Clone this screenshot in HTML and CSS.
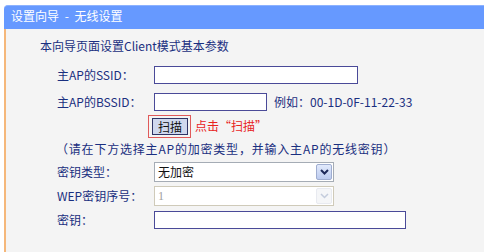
FILE: index.html
```html
<!DOCTYPE html>
<html>
    <head>
        <meta charset="utf-8">
        <title>设置向导 - 无线设置</title>
        <link rel="stylesheet" href="styles.css">
    </head>
    <body>
        <div class="wizard">
            <div class="wizard-title">设置向导 - 无线设置</div>
            <div class="wizard-body">
                <p class="intro">本向导页面设置Client模式基本参数</p>
                <div class="form">
                    <div class="row">
                        <label class="lbl">主AP的SSID：</label>
                        <input class="txt txt-ssid" type="text">
                    </div>
                    <div class="row row-bssid">
                        <label class="lbl">主AP的BSSID：</label>
                        <input class="txt txt-bssid" type="text">
                        <span class="hint">例如：00-1D-0F-11-22-33</span>
                    </div>
                    <div class="row">
                        <span class="lbl lbl-scan"></span>
                        <span class="scan-mark"><button class="btn-scan">扫描</button></span>
                        <span class="scan-tip">点击“扫描”</span>
                    </div>
                    <p class="note">（请在下方选择主AP的加密类型，并输入主AP的无线密钥）</p>
                    <div class="row">
                        <label class="lbl">密钥类型：</label>
                        <div class="select">
                            <span class="select-val">无加密</span>
                            <span class="select-btn">
                                <svg width="9" height="6" viewBox="0 0 9 6"><path d="M1 1 L4.5 4.5 L8 1" fill="none" stroke="#1e2a5a" stroke-width="2"/></svg>
                            </span>
                        </div>
                    </div>
                    <div class="row">
                        <label class="lbl">WEP密钥序号：</label>
                        <div class="select select-off">
                            <span class="select-val">1</span>
                            <span class="select-btn">
                                <svg width="9" height="6" viewBox="0 0 9 6"><path d="M1 1 L4.5 4.5 L8 1" fill="none" stroke="#c4ccdc" stroke-width="1.5"/></svg>
                            </span>
                        </div>
                    </div>
                    <div class="row">
                        <label class="lbl">密钥：</label>
                        <input class="txt txt-key" type="text">
                    </div>
                </div>
            </div>
        </div>
    </body>
</html>
```

FILE: styles.css
```css
body{
    margin: 0;
    background: #ffffff;
    font-family: "Noto Sans CJK SC", "Liberation Sans", sans-serif;
    font-size: 12px;
    line-height: 16px;
    color: #1a2f80;
}
.wizard{
    margin: 5px 0 0 4px;
}
.wizard-title{
    height: 24px;
    line-height: 20px;
    padding-left: 7px;
    background: #6699ff;
    border-top: 1px solid #8cb2ff;
    box-sizing: border-box;
    border-radius: 4px 0 0 0;
    color: #ffffff;
    word-spacing: 3px;
}
.wizard-body{
    height: 223px;
    background: #f4f4f4;
    border-left: 2px solid #f5b77a;
}
.intro{
    margin: 0;
    padding: 9px 0 0 34px;
}
.form{
    padding: 9px 0 0 51px;
}
.row{
    display: flex;
    align-items: center;
    height: 24px;
}
.row-bssid{
    margin-top: 3px;
}
.lbl{
    width: 97px;
    flex: none;
}
.lbl-scan{
    width: 91px;
}
.txt{
    height: 18px;
    box-sizing: border-box;
    border: 1px solid #4a4a98;
    background: #ffffff;
    padding: 0 2px;
    margin: 0;
    outline: none;
}
.txt-ssid{
    width: 204px;
}
.txt-bssid{
    width: 113px;
}
.txt-key{
    width: 252px;
}
.hint{
    margin-left: 7px;
}
.scan-mark{
    display: flex;
    padding: 2px 2px 2px 3px;
    border: 1px solid #e05a5a;
}
.btn-scan{
    width: 36px;
    height: 17px;
    padding: 0;
    border: 1px solid #2e3466;
    background: #cfd8ee;
    font-family: inherit;
    font-size: 12px;
    line-height: 15px;
    color: #111111;
}
.scan-tip{
    margin-left: 4px;
    color: #e8231e;
}
.note{
    margin: 0 0 0 -1px;
    height: 22px;
    line-height: 22px;
    letter-spacing: 0.8px;
}
.select{
    display: flex;
    width: 180px;
    height: 20px;
    box-sizing: border-box;
    border: 1px solid #a5acb5;
    background: #ffffff;
}
.select-val{
    flex: 1;
    padding-left: 3px;
    line-height: 18px;
    color: #111111;
}
.select-btn{
    width: 16px;
    margin: 1px;
    display: flex;
    align-items: center;
    justify-content: center;
    background: linear-gradient(#e2eafc, #bccbef);
    border: 1px solid #9fadd0;
    border-radius: 2px;
    box-sizing: border-box;
}
.select-off{
    border-color: #cfcab9;
}
.select-off .select-val{
    color: #a0a0a0;
    font-family: "Liberation Serif", serif;
}
.select-off .select-btn{
    background: #f5f6f8;
    border-color: #e8eaf0;
}
```
